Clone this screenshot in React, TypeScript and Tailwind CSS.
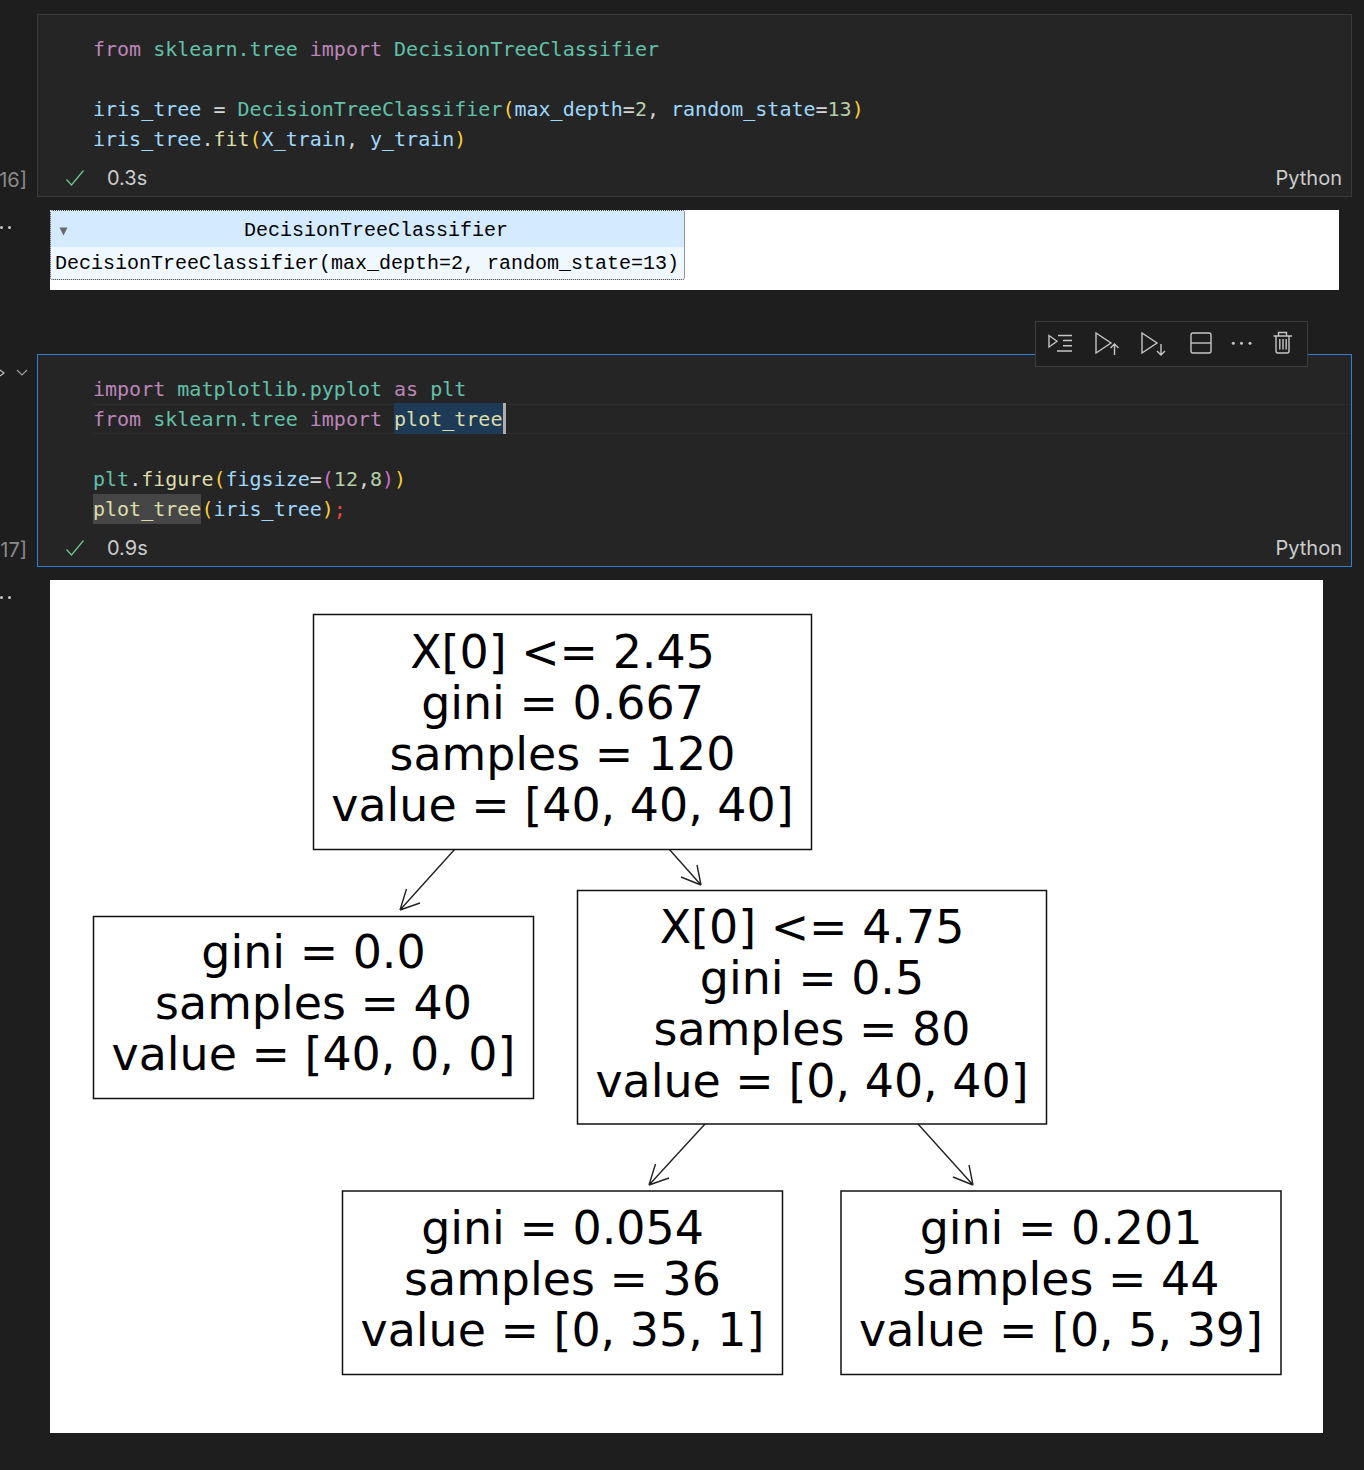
const mono = "font-['DejaVu_Sans_Mono',monospace]";
const sans = "font-['Inter','Noto_Sans',sans-serif]";

const C = {
  kw: "text-[#bd85b9]",
  cls: "text-[#62c1a9]",
  v: "text-[#9fd8fb]",
  w: "text-[#d4d4d4]",
  fn: "text-[#dcdcaa]",
  y: "text-[#f7d038]",
  n: "text-[#b5cea8]",
  p: "text-[#cc72c6]",
  r: "text-[#e8483f]",
};

function CodeLine({ children, className = "" }: { children?: React.ReactNode; className?: string }) {
  return <div className={`h-[30px] leading-[30px] whitespace-pre ${className}`}>{children}</div>;
}

function Check() {
  return (
    <svg width="20" height="18" viewBox="0 0 20 18" fill="none" className="shrink-0">
      <path d="M1.5 10.5 L6.5 16 L18.5 1.5" stroke="#73c991" strokeWidth="1.2" />
    </svg>
  );
}

function StatusBar({ time, count }: { time: string; count: string }) {
  return (
    <div className={`relative flex h-[30px] items-center pl-[27px] pr-[9px] pt-[2px] text-[20px] text-[#cccccc] ${sans}`}>
      <Check />
      <span className="ml-[22px] text-[20px]">{time}</span>
      <span className="ml-auto text-[20px]">Python</span>
      <span className="absolute right-full top-[3px] mr-[11px] text-[20px] leading-[30px] text-[#8a8a8a]">{count}</span>
    </div>
  );
}

function Dots() {
  return (
    <div className="absolute left-0 top-[16px] flex gap-[5px]">
      <span className="h-[3px] w-[3px] rounded-full bg-[#c8c8c8]" />
      <span className="h-[3px] w-[3px] rounded-full bg-[#c8c8c8]" />
    </div>
  );
}

function Toolbar() {
  const s = { stroke: "#c5c5c5", strokeWidth: 1.4, fill: "none" };
  return (
    <div className="absolute right-[43px] top-[-34px] flex h-[46px] w-[273px] items-center border border-[#3c3c3c] bg-[#1e1e1e]">
      <svg width="271" height="44" viewBox="0 0 271 44">
        <g {...s} transform="translate(-1036 -322)">
          <path d="M1049 335.500v11.500l8-5.750z" />
          <path d="M1058 335.500h14M1063 340.500h9M1063 345.800h9M1057 351h15" />
          <path d="M1096 333v20l15-10z" />
          <path d="M1114.500 355v-11M1110.500 348l4-4 4 4" />
          <path d="M1142 333v20l15-10z" />
          <path d="M1161 344v11M1157 351l4 4 4-4" />
          <rect x="1191" y="333" width="20" height="20" rx="2" />
          <path d="M1191 343h20" />
          <path d="M1273.500 336h18.500M1278.500 336v-3.500h8v3.500M1276 336v15a2 2 0 0 0 2 2h9a2 2 0 0 0 2-2v-15M1279.800 339v10.500M1283 339v10.500M1286.200 339v10.500" />
          <g fill="#c5c5c5" stroke="none">
            <circle cx="1233.300" cy="343.300" r="1.500" />
            <circle cx="1241.500" cy="343.300" r="1.500" />
            <circle cx="1250" cy="343.300" r="1.500" />
          </g>
        </g>
      </svg>
    </div>
  );
}

type NodeProps = { x: number; y: number; w: number; h: number; lines: string[]; first: number };
function TreeNode({ x, y, w, h, lines, first }: NodeProps) {
  return (
    <g>
      <rect x={x} y={y} width={w} height={h} fill="#ffffff" stroke="#111111" strokeWidth="1.500" />
      {lines.map((t, i) => (
        <text key={i} x={x + w / 2} y={first + i * 51.2} textAnchor="middle" fontSize="45.900" fill="#000000" fontFamily="'DejaVu Sans', sans-serif">
          {t}
        </text>
      ))}
    </g>
  );
}

function Tree() {
  const edges = [
    "M455 849 L400 910 M400 910 L406.500 889 M400 910 L420 903",
    "M669 849 L701 885 M701 885 L697 865 M701 885 L681 877",
    "M705 1124 L649 1185 M649 1185 L655.500 1164 M649 1185 L669 1178",
    "M918 1124 L973 1185 M973 1185 L969 1165 M973 1185 L953 1177",
  ];
  return (
    <svg width="1273" height="853" viewBox="50 580 1273 853" className="block">
      {edges.map((d, i) => (
        <path key={i} d={d} fill="none" stroke="#222222" strokeWidth="1.400" />
      ))}
      <TreeNode x={313.500} y={614.500} w={498} h={235} first={667.500} lines={["X[0] <= 2.45", "gini = 0.667", "samples = 120", "value = [40, 40, 40]"]} />
      <TreeNode x={93.500} y={916.500} w={440} h={182} first={968} lines={["gini = 0.0", "samples = 40", "value = [40, 0, 0]"]} />
      <TreeNode x={577.500} y={890.500} w={469} h={233.500} first={943} lines={["X[0] <= 4.75", "gini = 0.5", "samples = 80", "value = [0, 40, 40]"]} />
      <TreeNode x={342.500} y={1191} w={440} h={183.500} first={1244} lines={["gini = 0.054", "samples = 36", "value = [0, 35, 1]"]} />
      <TreeNode x={841} y={1191} w={440} h={183.500} first={1244} lines={["gini = 0.201", "samples = 44", "value = [0, 5, 39]"]} />
    </svg>
  );
}

export default function App() {
  return (
    <div className="h-[1470px] w-[1364px] overflow-hidden bg-[#1e1e1e] pl-[37px] pr-[12px] pt-[14px]">
      {/* first cell */}
      <div className="h-[183px] border border-[#3a3a3a] bg-[#252526] pt-[19px]">
        <div className={`pl-[55px] text-[20px] ${mono}`}>
          <CodeLine>
            <span className={C.kw}>from</span> <span className={C.cls}>sklearn.tree</span> <span className={C.kw}>import</span> <span className={C.cls}>DecisionTreeClassifier</span>
          </CodeLine>
          <CodeLine />
          <CodeLine>
            <span className={C.v}>iris_tree</span> <span className={C.w}>=</span> <span className={C.cls}>DecisionTreeClassifier</span><span className={C.y}>(</span><span className={C.v}>max_depth</span><span className={C.w}>=</span><span className={C.n}>2</span><span className={C.w}>,</span> <span className={C.v}>random_state</span><span className={C.w}>=</span><span className={C.n}>13</span><span className={C.y}>)</span>
          </CodeLine>
          <CodeLine>
            <span className={C.v}>iris_tree</span><span className={C.w}>.</span><span className={C.fn}>fit</span><span className={C.y}>(</span><span className={C.v}>X_train</span><span className={C.w}>,</span> <span className={C.v}>y_train</span><span className={C.y}>)</span>
          </CodeLine>
        </div>
        <div className="mt-[8px]">
          <StatusBar time="0.3s" count="16]" />
        </div>
      </div>

      {/* first output */}
      <div className="relative ml-[13px] mr-[13px] mt-[13px] h-[80px] bg-white">
        <div className="absolute left-[-50px] top-0 h-full w-[40px]"><Dots /></div>
        <div className="w-[635px] rounded-[3px] border border-dotted border-[#333333] bg-[#f0f8ff] text-[20px] text-black font-['Liberation_Mono',monospace]">
          <div className="relative h-[36px] bg-[#d4ebff] pl-[17px] text-center leading-[40px]">
            <svg width="9" height="9" viewBox="0 0 9 9" className="absolute left-[8px] top-[16px]">
              <path d="M0.500 0.500 H8.500 L4.500 8.500 Z" fill="#696969" />
            </svg>
            DecisionTreeClassifier
          </div>
          <div className="h-[32px] whitespace-pre pl-[4px] leading-[34px]">DecisionTreeClassifier(max_depth=2, random_state=13)</div>
        </div>
      </div>

      {/* second cell */}
      <div className="relative mt-[64px] h-[213px] border border-[#2f7ed8] bg-[#252526] pt-[19px]">
        <Toolbar />
        <svg width="30" height="12" viewBox="0 0 30 12" className="absolute left-[-38px] top-[13px]" fill="none" stroke="#c5c5c5" strokeWidth="1.100">
          <path d="M0 2 L4 5 L0 8" />
          <path d="M17 2 L22 7 L27 2" stroke="#a0a0a0" />
        </svg>
        <div className={`pl-[55px] text-[20px] ${mono}`}>
          <CodeLine>
            <span className={C.kw}>import</span> <span className={C.cls}>matplotlib.pyplot</span> <span className={C.kw}>as</span> <span className={C.cls}>plt</span>
          </CodeLine>
          <div className="-ml-[1px] h-[30px] border-y border-[#2c2c2d] pl-[1px]">
            <div className="-translate-y-[1px] whitespace-pre leading-[30px]">
              <span className={C.kw}>from</span> <span className={C.cls}>sklearn.tree</span> <span className={C.kw}>import</span> <span className={`${C.fn} border-r-[3px] border-[#aeafad] bg-[#1d3b57] pt-[4px] pr-[1px] pb-[3px]`}>plot_tree</span>
            </div>
          </div>
          <CodeLine />
          <CodeLine>
            <span className={C.cls}>plt</span><span className={C.w}>.</span><span className={C.fn}>figure</span><span className={C.y}>(</span><span className={C.v}>figsize</span><span className={C.w}>=</span><span className={C.p}>(</span><span className={C.n}>12</span><span className={C.w}>,</span><span className={C.n}>8</span><span className={C.p}>)</span><span className={C.y}>)</span>
          </CodeLine>
          <CodeLine>
            <span className={`${C.fn} bg-[#464646] py-[3px]`}>plot_tree</span><span className={C.y}>(</span><span className={C.v}>iris_tree</span><span className={C.y}>)</span><span className={C.r}>;</span>
          </CodeLine>
        </div>
        <div className="mt-[8px]">
          <StatusBar time="0.9s" count="17]" />
        </div>
      </div>

      {/* plot output */}
      <div className="relative ml-[13px] mt-[13px] h-[853px] w-[1273px] bg-white">
        <div className="absolute left-[-50px] top-0 h-full w-[40px]"><Dots /></div>
        <Tree />
      </div>
    </div>
  );
}
